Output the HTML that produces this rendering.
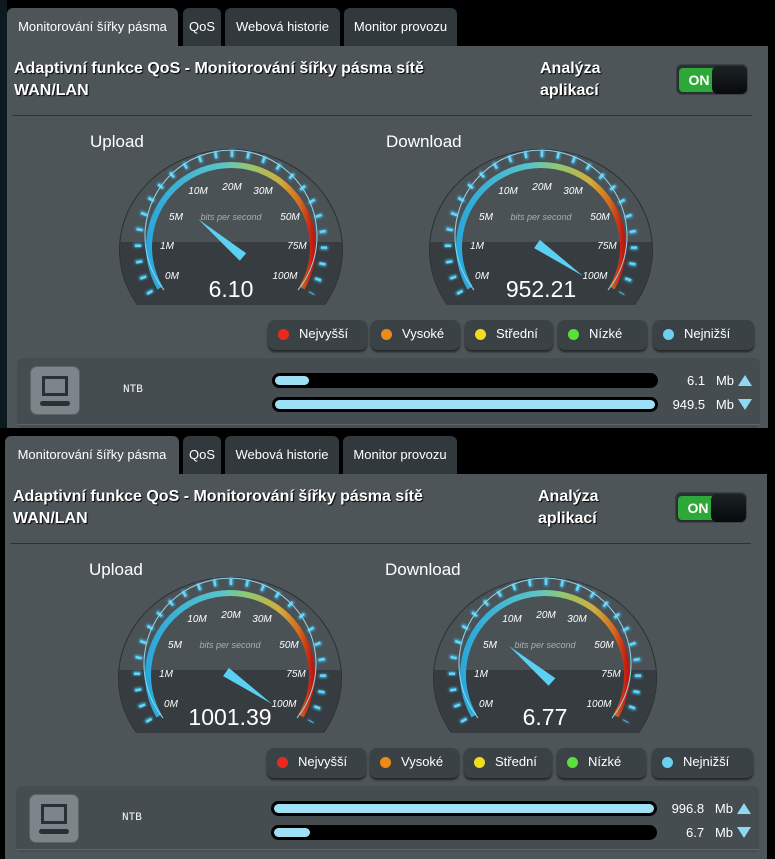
<!DOCTYPE html>
<html><head><meta charset="utf-8"><style>
*{margin:0;padding:0;box-sizing:border-box}
body{width:775px;height:859px;background:#000;position:relative;overflow:hidden;font-family:"Liberation Sans",sans-serif;color:#fff}
.a{position:absolute}
.panel{background:#4d5559}
.tab{position:absolute;height:38px;border-radius:6px 6px 0 0;background:#32393c;color:#fff;font-size:13px;line-height:38px;text-align:center}
.tab.on{background:#4d5559}
.h{font-weight:bold;font-size:16px;line-height:22px;text-shadow:1px 1px 1px #000}
.lbl{font-size:17px;color:#fff}
.sep{height:1px;background:#2c3336}
.tog{width:72px;height:31px;border-radius:6px;background:#2a2f31;border:1px solid #3a4245}
.tog .g{position:absolute;left:2px;top:3px;width:40px;height:24px;background:#2fa83a;border-radius:4px;font-weight:bold;font-size:14px;line-height:24px;text-align:center}
.tog .k{position:absolute;left:35px;top:1px;width:35px;height:28px;background:linear-gradient(#1c2224,#080a0b);border-radius:6px}
.btn{position:absolute;height:30px;background:#3a4246;border-radius:7px;box-shadow:0 2px 2px #222;font-size:13px;line-height:28px}
.btn i{position:absolute;left:10px;top:9px;width:11px;height:11px;border-radius:50%}
.btn span{position:absolute;left:31px}
.row{background:#454d51;border-radius:6px}
.ic{width:50px;height:49px;background:#7c8589;border-radius:7px;border:1px solid #5a6366}
.bar{height:15px;background:#000;border-radius:8px}
.bar b{position:absolute;left:3px;top:3px;height:9px;background:#9ee1f7;border-radius:5px}
.val{font-size:13px;text-align:right;width:70px}
.ntb{font-family:"Liberation Mono",monospace;font-size:11px}
.ar{width:0;height:0;border-left:7px solid transparent;border-right:7px solid transparent}
svg text{font-family:"Liberation Sans",sans-serif}
</style></head><body>
<svg width="0" height="0" style="position:absolute"><defs><linearGradient id="gr" x1="0" x2="1" y1="0" y2="0"><stop offset="0" stop-color="#2aa8dc"/><stop offset=".45" stop-color="#5cc4c8"/><stop offset=".6" stop-color="#8ec874"/><stop offset=".8" stop-color="#cfae3c"/><stop offset=".92" stop-color="#d46a1e"/><stop offset="1" stop-color="#c01a10"/></linearGradient>
<clipPath id="cp"><rect x="0" y="0" width="234" height="157"/></clipPath>
<clipPath id="ce"><ellipse cx="115" cy="102" rx="111" ry="100"/></clipPath>
<filter id="gl"><feGaussianBlur stdDeviation="1.2"/></filter></defs></svg>
<div class="a" style="left:0;top:0;width:7px;height:428px;background:#0c1a20"></div>
<!-- TOP -->
<div class="tab on" style="left:7px;top:8px;width:171px">Monitorování šířky pásma</div>
<div class="tab" style="left:183px;top:8px;width:38px">QoS</div>
<div class="tab" style="left:225px;top:8px;width:115px">Webová historie</div>
<div class="tab" style="left:344px;top:8px;width:113px">Monitor provozu</div>
<div class="a panel" style="left:7px;top:46px;width:761px;height:382px"></div>
<div class="a h" style="left:14px;top:58px">Adaptivní funkce QoS - Monitorování šířky pásma sítě<br>WAN/LAN</div>
<div class="a h" style="left:540px;top:58px">Analýza<br>aplikací</div>
<div class="a tog" style="left:676px;top:64px"><div class="g">ON</div><div class="k"></div></div>
<div class="a sep" style="left:12px;top:115px;width:740px"></div>
<div class="a lbl" style="left:90px;top:132px">Upload</div>
<div class="a lbl" style="left:386px;top:132px">Download</div>

<svg class="a" style="left:116px;top:148px" width="234" height="160" viewBox="0 0 234 160">
<g clip-path="url(#cp)"><ellipse cx="115" cy="102" rx="112" ry="101" fill="#2b3134"/><g clip-path="url(#ce)"><rect x="0" y="0" width="234" height="160" fill="#4a5256"/><rect x="0" y="94" width="234" height="66" fill="#363c40"/></g></g>
<path d="M34.5,145.5 A93,93 0 1 1 195.5,145.5" fill="none" stroke="#3ab8e8" stroke-width="8" stroke-dasharray="3.5 12.7" filter="url(#gl)"/>
<path d="M34.5,145.5 A93,93 0 1 1 195.5,145.5" fill="none" stroke="#6ad6f6" stroke-width="6" stroke-dasharray="2.5 13.7"/>
<path d="M44,140 A82,82 0 1 1 186,140" fill="none" stroke="url(#gr)" stroke-width="6"/>
<path d="M48,142 A86,86 0 1 1 182,142" fill="none" stroke="#8fd6ee" stroke-width="1"/>
<g font-size="10" font-style="italic" fill="#fff" text-anchor="middle"><text x="56" y="131">0M</text><text x="51" y="101">1M</text><text x="60" y="72">5M</text><text x="82" y="46">10M</text><text x="116" y="42">20M</text><text x="147" y="46">30M</text><text x="174" y="72">50M</text><text x="181" y="101">75M</text><text x="169" y="131">100M</text></g>
<text x="115" y="72" font-size="9" font-style="italic" fill="#a8aeb1" text-anchor="middle">bits per second</text>
<polygon points="130.2,105.2 123.8,112.8 82,71" fill="#5cd0f2"/>
<text x="115" y="149" font-size="23" fill="#fff" text-anchor="middle">6.10</text>
</svg>
<svg class="a" style="left:426px;top:148px" width="234" height="160" viewBox="0 0 234 160">
<g clip-path="url(#cp)"><ellipse cx="115" cy="102" rx="112" ry="101" fill="#2b3134"/><g clip-path="url(#ce)"><rect x="0" y="0" width="234" height="160" fill="#4a5256"/><rect x="0" y="94" width="234" height="66" fill="#363c40"/></g></g>
<path d="M34.5,145.5 A93,93 0 1 1 195.5,145.5" fill="none" stroke="#3ab8e8" stroke-width="8" stroke-dasharray="3.5 12.7" filter="url(#gl)"/>
<path d="M34.5,145.5 A93,93 0 1 1 195.5,145.5" fill="none" stroke="#6ad6f6" stroke-width="6" stroke-dasharray="2.5 13.7"/>
<path d="M44,140 A82,82 0 1 1 186,140" fill="none" stroke="url(#gr)" stroke-width="6"/>
<path d="M48,142 A86,86 0 1 1 182,142" fill="none" stroke="#8fd6ee" stroke-width="1"/>
<g font-size="10" font-style="italic" fill="#fff" text-anchor="middle"><text x="56" y="131">0M</text><text x="51" y="101">1M</text><text x="60" y="72">5M</text><text x="82" y="46">10M</text><text x="116" y="42">20M</text><text x="147" y="46">30M</text><text x="174" y="72">50M</text><text x="181" y="101">75M</text><text x="169" y="131">100M</text></g>
<text x="115" y="72" font-size="9" font-style="italic" fill="#a8aeb1" text-anchor="middle">bits per second</text>
<polygon points="108.1,100.1 113.9,91.9 157,128" fill="#5cd0f2"/>
<text x="115" y="149" font-size="23" fill="#fff" text-anchor="middle">952.21</text>
</svg>

<div class="btn" style="left:268px;top:320px;width:99px"><i style="background:#e82a1e"></i><span>Nejvyšší</span></div>
<div class="btn" style="left:371px;top:320px;width:89px"><i style="background:#ee8a1a"></i><span>Vysoké</span></div>
<div class="btn" style="left:465px;top:320px;width:88px"><i style="background:#eedc1e"></i><span>Střední</span></div>
<div class="btn" style="left:558px;top:320px;width:89px"><i style="background:#5ae03a"></i><span>Nízké</span></div>
<div class="btn" style="left:653px;top:320px;width:101px"><i style="background:#6cd0f2"></i><span>Nejnižší</span></div>

<div class="a row" style="left:17px;top:358px;width:743px;height:70px"></div>
<div class="a ic" style="left:30px;top:366px"><div class="a" style="left:11px;top:9px;width:26px;height:20px;border:3px solid #2a3033;background:#7c8589"></div><div class="a" style="left:9px;top:34px;width:30px;height:5px;border-radius:3px;background:#2a3033"></div></div>
<div class="a ntb" style="left:123px;top:384px">NTB</div>
<div class="a bar" style="left:272px;top:373px;width:386px"><b style="width:34px"></b></div>
<div class="a bar" style="left:272px;top:397px;width:386px"><b style="width:380px"></b></div>
<div class="a val" style="left:664px;top:373px">6.1&nbsp;&nbsp; Mb</div>
<div class="a val" style="left:664px;top:397px">949.5&nbsp;&nbsp; Mb</div>
<div class="a ar" style="left:738px;top:375px;border-bottom:11px solid #8fd8f2"></div>
<div class="a ar" style="left:738px;top:399px;border-top:11px solid #8fd8f2"></div>
<div class="a sep" style="left:17px;top:424px;width:743px;background:#5e6669"></div>

<!-- BOTTOM -->
<div class="tab on" style="left:5px;top:436px;width:174px">Monitorování šířky pásma</div>
<div class="tab" style="left:183px;top:436px;width:38px">QoS</div>
<div class="tab" style="left:225px;top:436px;width:114px">Webová historie</div>
<div class="tab" style="left:343px;top:436px;width:114px">Monitor provozu</div>
<div class="a panel" style="left:5px;top:474px;width:762px;height:385px"></div>
<div class="a h" style="left:13px;top:486px">Adaptivní funkce QoS - Monitorování šířky pásma sítě<br>WAN/LAN</div>
<div class="a h" style="left:538px;top:486px">Analýza<br>aplikací</div>
<div class="a tog" style="left:675px;top:492px"><div class="g">ON</div><div class="k"></div></div>
<div class="a sep" style="left:11px;top:543px;width:740px"></div>
<div class="a lbl" style="left:89px;top:560px">Upload</div>
<div class="a lbl" style="left:385px;top:560px">Download</div>

<svg class="a" style="left:115px;top:576px" width="234" height="160" viewBox="0 0 234 160">
<g clip-path="url(#cp)"><ellipse cx="115" cy="102" rx="112" ry="101" fill="#2b3134"/><g clip-path="url(#ce)"><rect x="0" y="0" width="234" height="160" fill="#4a5256"/><rect x="0" y="94" width="234" height="66" fill="#363c40"/></g></g>
<path d="M34.5,145.5 A93,93 0 1 1 195.5,145.5" fill="none" stroke="#3ab8e8" stroke-width="8" stroke-dasharray="3.5 12.7" filter="url(#gl)"/>
<path d="M34.5,145.5 A93,93 0 1 1 195.5,145.5" fill="none" stroke="#6ad6f6" stroke-width="6" stroke-dasharray="2.5 13.7"/>
<path d="M44,140 A82,82 0 1 1 186,140" fill="none" stroke="url(#gr)" stroke-width="6"/>
<path d="M48,142 A86,86 0 1 1 182,142" fill="none" stroke="#8fd6ee" stroke-width="1"/>
<g font-size="10" font-style="italic" fill="#fff" text-anchor="middle"><text x="56" y="131">0M</text><text x="51" y="101">1M</text><text x="60" y="72">5M</text><text x="82" y="46">10M</text><text x="116" y="42">20M</text><text x="147" y="46">30M</text><text x="174" y="72">50M</text><text x="181" y="101">75M</text><text x="169" y="131">100M</text></g>
<text x="115" y="72" font-size="9" font-style="italic" fill="#a8aeb1" text-anchor="middle">bits per second</text>
<polygon points="108.1,100.1 113.9,91.9 157,128" fill="#5cd0f2"/>
<text x="115" y="149" font-size="23" fill="#fff" text-anchor="middle">1001.39</text>
</svg>
<svg class="a" style="left:430px;top:576px" width="234" height="160" viewBox="0 0 234 160">
<g clip-path="url(#cp)"><ellipse cx="115" cy="102" rx="112" ry="101" fill="#2b3134"/><g clip-path="url(#ce)"><rect x="0" y="0" width="234" height="160" fill="#4a5256"/><rect x="0" y="94" width="234" height="66" fill="#363c40"/></g></g>
<path d="M34.5,145.5 A93,93 0 1 1 195.5,145.5" fill="none" stroke="#3ab8e8" stroke-width="8" stroke-dasharray="3.5 12.7" filter="url(#gl)"/>
<path d="M34.5,145.5 A93,93 0 1 1 195.5,145.5" fill="none" stroke="#6ad6f6" stroke-width="6" stroke-dasharray="2.5 13.7"/>
<path d="M44,140 A82,82 0 1 1 186,140" fill="none" stroke="url(#gr)" stroke-width="6"/>
<path d="M48,142 A86,86 0 1 1 182,142" fill="none" stroke="#8fd6ee" stroke-width="1"/>
<g font-size="10" font-style="italic" fill="#fff" text-anchor="middle"><text x="56" y="131">0M</text><text x="51" y="101">1M</text><text x="60" y="72">5M</text><text x="82" y="46">10M</text><text x="116" y="42">20M</text><text x="147" y="46">30M</text><text x="174" y="72">50M</text><text x="181" y="101">75M</text><text x="169" y="131">100M</text></g>
<text x="115" y="72" font-size="9" font-style="italic" fill="#a8aeb1" text-anchor="middle">bits per second</text>
<polygon points="125.4,102.3 118.6,109.7 79,70" fill="#5cd0f2"/>
<text x="115" y="149" font-size="23" fill="#fff" text-anchor="middle">6.77</text>
</svg>

<div class="btn" style="left:267px;top:748px;width:99px"><i style="background:#e82a1e"></i><span>Nejvyšší</span></div>
<div class="btn" style="left:370px;top:748px;width:89px"><i style="background:#ee8a1a"></i><span>Vysoké</span></div>
<div class="btn" style="left:464px;top:748px;width:88px"><i style="background:#eedc1e"></i><span>Střední</span></div>
<div class="btn" style="left:557px;top:748px;width:89px"><i style="background:#5ae03a"></i><span>Nízké</span></div>
<div class="btn" style="left:652px;top:748px;width:101px"><i style="background:#6cd0f2"></i><span>Nejnižší</span></div>

<div class="a row" style="left:16px;top:786px;width:743px;height:66px"></div>
<div class="a ic" style="left:29px;top:794px"><div class="a" style="left:11px;top:9px;width:26px;height:20px;border:3px solid #2a3033;background:#7c8589"></div><div class="a" style="left:9px;top:34px;width:30px;height:5px;border-radius:3px;background:#2a3033"></div></div>
<div class="a ntb" style="left:122px;top:812px">NTB</div>
<div class="a bar" style="left:271px;top:801px;width:386px"><b style="width:380px"></b></div>
<div class="a bar" style="left:271px;top:825px;width:386px"><b style="width:36px"></b></div>
<div class="a val" style="left:663px;top:801px">996.8&nbsp;&nbsp; Mb</div>
<div class="a val" style="left:663px;top:825px">6.7&nbsp;&nbsp; Mb</div>
<div class="a ar" style="left:737px;top:803px;border-bottom:11px solid #8fd8f2"></div>
<div class="a ar" style="left:737px;top:827px;border-top:11px solid #8fd8f2"></div>
<div class="a sep" style="left:16px;top:849px;width:743px;background:#5e6669"></div>
</body></html>
